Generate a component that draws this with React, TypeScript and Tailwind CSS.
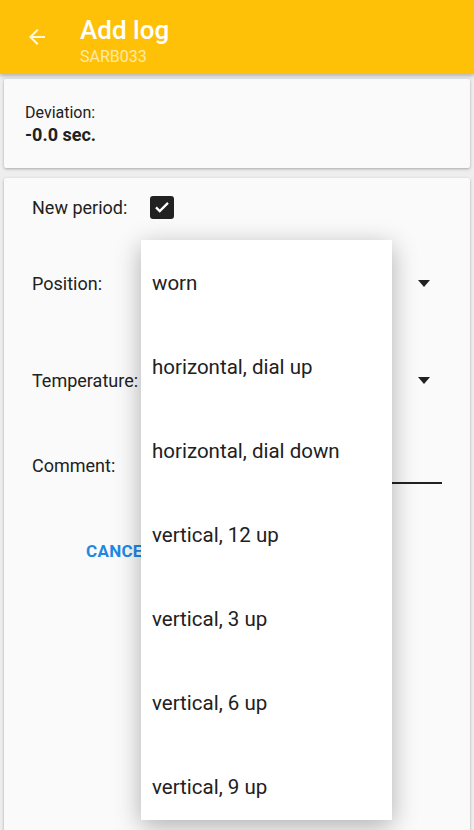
import React from "react";

const positions = [
  "worn",
  "horizontal, dial up",
  "horizontal, dial down",
  "vertical, 12 up",
  "vertical, 3 up",
  "vertical, 6 up",
  "vertical, 9 up",
];

function Caret() {
  return (
    <svg width="12" height="7" viewBox="0 0 12 7" className="shrink-0">
      <path d="M0 0h12L6 7z" fill="#212121" />
    </svg>
  );
}

export default function App() {
  return (
    <div
      className="relative h-[830px] w-[474px] overflow-hidden bg-[#eeeeee] text-[#212121]"
      style={{ fontFamily: "Roboto, 'Liberation Sans', sans-serif" }}
    >
      <header className="flex h-[74px] items-center bg-[#ffc107] shadow-[0_2px_4px_rgba(0,0,0,0.25)]">
        <div className="flex w-[80px] justify-center pr-[6px]">
          <svg width="24" height="24" viewBox="0 0 24 24">
            <path
              d="M20 11H7.83l5.59-5.59L12 4l-8 8 8 8 1.41-1.41L7.83 13H20v-2z"
              fill="#fff8e1"
            />
          </svg>
        </div>
        <div className="flex flex-col pt-[5px]">
          <span className="text-[26px] font-medium leading-[34px] text-white">Add log</span>
          <span className="text-[16px] leading-[20px] text-[#ffe9a6]">SARB033</span>
        </div>
      </header>

      <section className="mx-[4px] mt-[5px] flex h-[89px] flex-col justify-center rounded-[2px] bg-[#fafafa] px-[21px] shadow-[0_1px_3px_rgba(0,0,0,0.3)]">
        <span className="text-[16px] leading-[21px]">Deviation:</span>
        <span className="text-[18px] font-bold leading-[23px]">-0.0 sec.</span>
      </section>

      <section className="mx-[4px] mt-[10px] h-[700px] rounded-[2px] bg-[#fafafa] px-[28px] pt-[5px] shadow-[0_1px_3px_rgba(0,0,0,0.3)]">
        <div className="flex h-[48px] items-center">
          <span className="w-[118px] text-[18px]">New period:</span>
          <span className="flex h-[23px] w-[24px] items-center justify-center rounded-[3px] bg-[#212121]">
            <svg width="18" height="18" viewBox="0 0 24 24">
              <path d="M4 12.5l5 5L20 6.5" stroke="#fff" strokeWidth="3" fill="none" />
            </svg>
          </span>
        </div>
        <div className="flex h-[104px] items-center">
          <span className="w-[109px] text-[18px]">Position:</span>
          <div className="flex flex-1 items-center justify-end pr-[12px]">
            <Caret />
          </div>
        </div>
        <div className="flex h-[90px] items-center">
          <span className="w-[109px] text-[18px]">Temperature:</span>
          <div className="flex flex-1 items-center justify-end pr-[12px]">
            <Caret />
          </div>
        </div>
        <div className="flex h-[80px] items-center">
          <span className="w-[109px] text-[18px]">Comment:</span>
          <div className="flex-1 self-stretch pt-[57px]">
            <div className="h-[2px] bg-[#212121]" />
          </div>
        </div>
        <div className="flex h-[94px] items-center pl-[54px]">
          <span className="text-[17px] font-bold tracking-[0.3px] text-[#1e88e5]">CANCEL</span>
        </div>
      </section>

      <div className="absolute left-[141px] top-[240px] h-[580px] w-[251px] overflow-hidden bg-white pt-[1px] shadow-[0_6px_24px_rgba(0,0,0,0.3)]">
        {positions.map((p) => (
          <div key={p} className="flex h-[84px] items-center pl-[11px] text-[20.5px]">
            {p}
          </div>
        ))}
      </div>
    </div>
  );
}
